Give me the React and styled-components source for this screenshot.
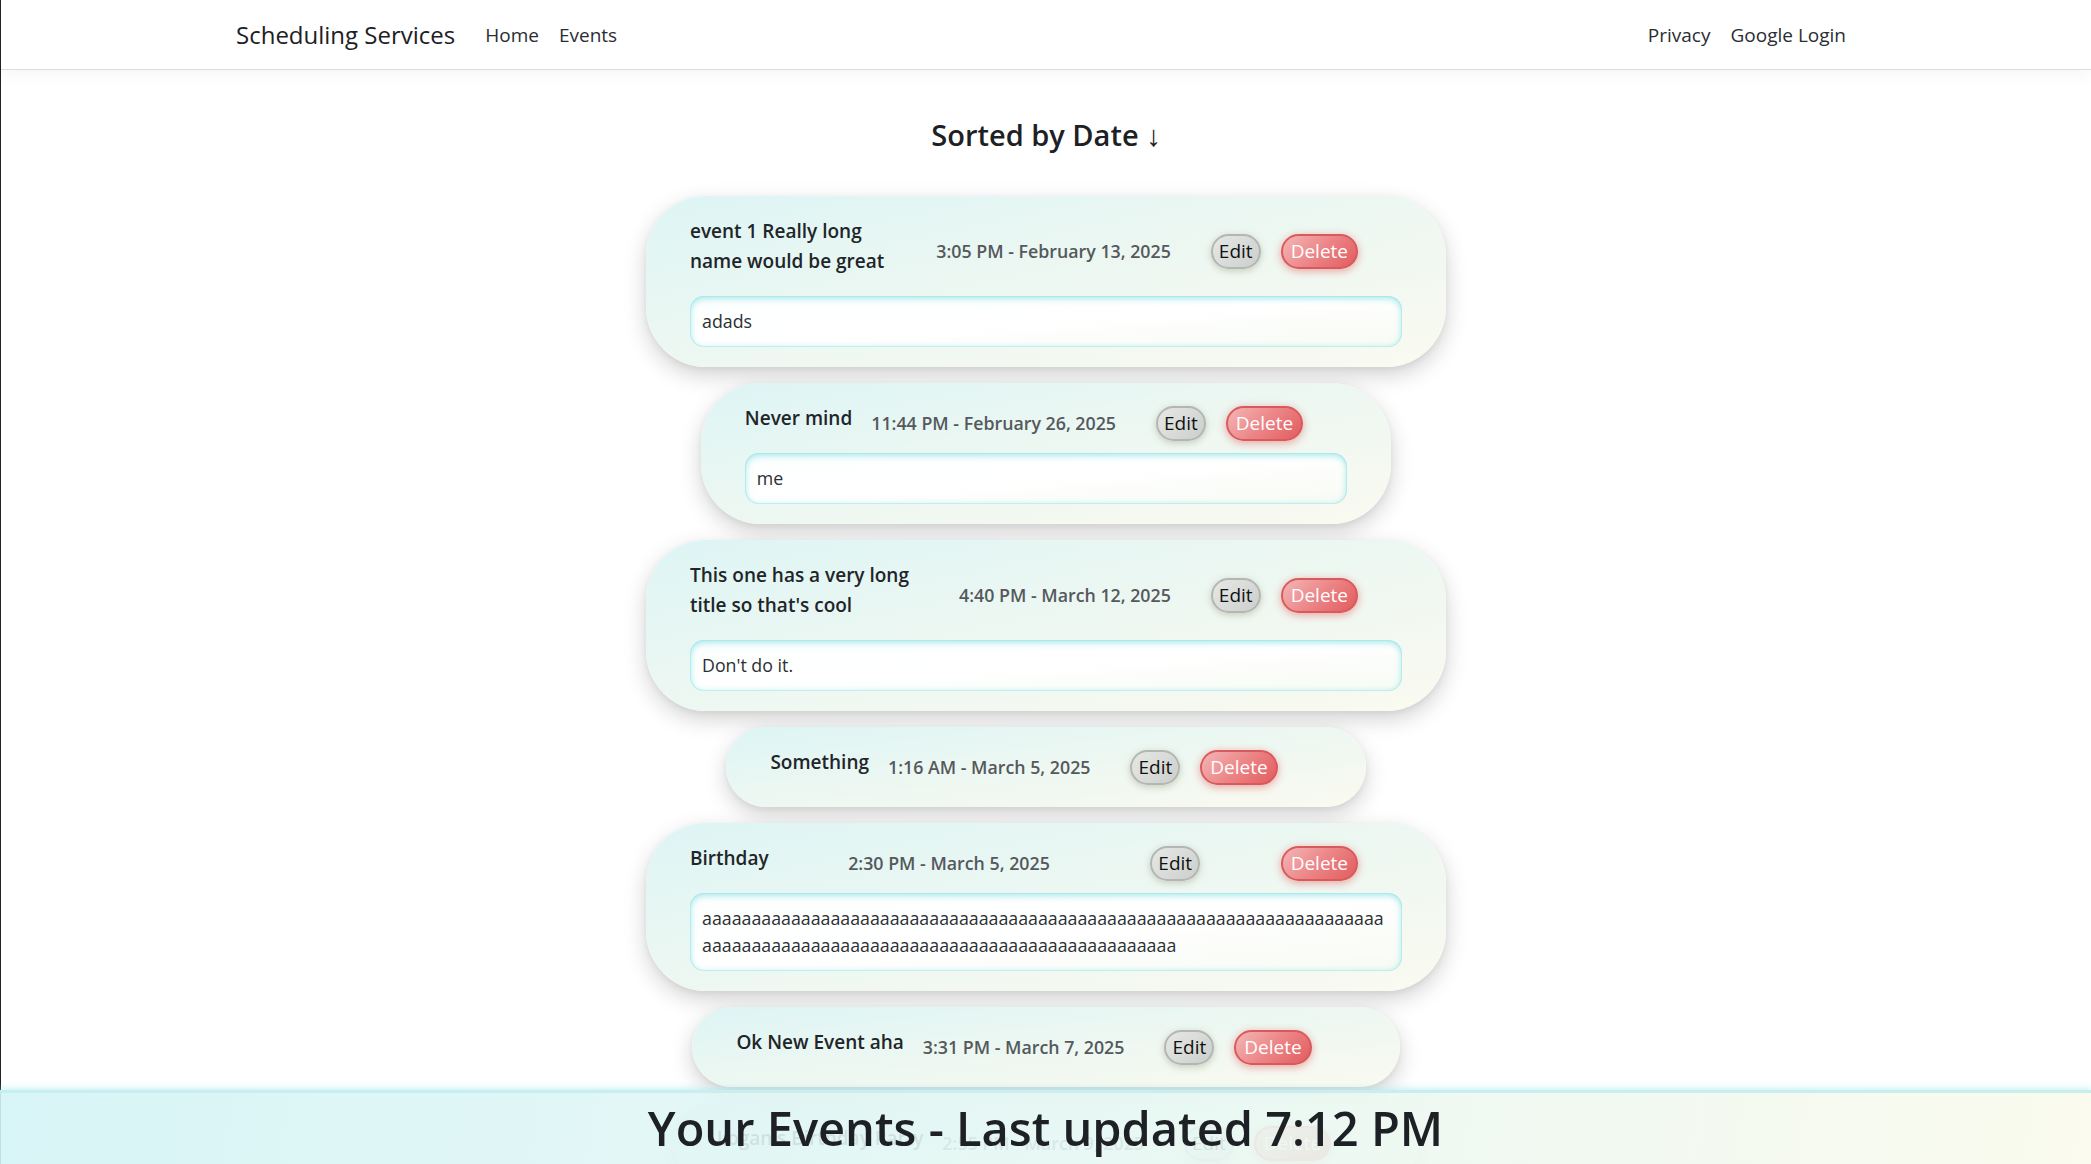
import React from 'react'
import styled, { createGlobalStyle } from 'styled-components'

const events = [
  { title: 'event 1 Really long name would be great', when: '3:05 PM - February 13, 2025', note: 'adads' },
  { title: 'Never mind', when: '11:44 PM - February 26, 2025', note: 'me' },
  { title: "This one has a very long title so that's cool", when: '4:40 PM - March 12, 2025', note: "Don't do it." },
  { title: 'Something', when: '1:16 AM - March 5, 2025' },
  { title: 'Birthday', when: '2:30 PM - March 5, 2025', note: 'a'.repeat(117) },
  { title: 'Ok New Event aha', when: '3:31 PM - March 7, 2025' },
  { title: "Logan's Birthday Party", when: '2:55 PM - March 9, 2025' },
]

export default function App() {
  return (
    <>
      <GlobalStyle />
      <Navbar>
        <NavInner>
          <Brand href="#">Scheduling Services</Brand>
          <NavList>
            <NavLink href="#">Home</NavLink>
            <NavLink href="#">Events</NavLink>
          </NavList>
          <NavList $right>
            <NavLink href="#">Privacy</NavLink>
            <NavLink href="#">Google Login</NavLink>
          </NavList>
        </NavInner>
      </Navbar>

      <Main>
        <Heading>Sorted by Date ↓</Heading>
        <EventList>
          {events.map((ev) => (
            <EventCard key={ev.title}>
              <CardHeader>
                <EventTitle>{ev.title}</EventTitle>
                <EventDate>{ev.when}</EventDate>
                <Button>Edit</Button>
                <Button $danger>Delete</Button>
              </CardHeader>
              {ev.note && <Note>{ev.note}</Note>}
            </EventCard>
          ))}
        </EventList>
      </Main>

      <Footer>
        <FooterTitle>Your Events - Last updated 7:12 PM</FooterTitle>
      </Footer>
    </>
  )
}

const GlobalStyle = createGlobalStyle`
  html, body {
    margin: 0;
    padding: 0;
  }
  body {
    font-family: "Open Sans", "Noto Sans", sans-serif;
    color: #212529;
    background: #fff;
    border-left: 1px solid #1f2326;
    min-height: 100vh;
  }
  * { box-sizing: border-box; }
`

const Navbar = styled.nav`
  background: #fff;
  border-bottom: 1px solid #dcdde3;
  box-shadow: 0 5px 15px rgba(0, 0, 0, 0.04);
`

const NavInner = styled.div`
  max-width: 1650px;
  margin: 0 auto;
  padding: 0 15px;
  height: 69px;
  display: flex;
  align-items: center;
`

const Brand = styled.a`
  font-size: 24px;
  color: #1d2024;
  text-decoration: none;
  margin-right: 20px;
`

const NavList = styled.div`
  display: flex;
  margin-left: ${(p) => (p.$right ? 'auto' : '0')};
`

const NavLink = styled.a`
  font-size: 19px;
  color: #2a2d33;
  text-decoration: none;
  padding: 0 10px;
`

const Main = styled.main`
  max-width: 1650px;
  margin: 0 auto;
  padding: 20px 15px 140px;
`

const Heading = styled.h4`
  margin: 27px 0 43px;
  text-align: center;
  font-size: 29px;
  font-weight: 600;
  line-height: 36px;
  color: #1d2024;
`

const EventList = styled.div`
  display: flex;
  flex-direction: column;
  align-items: center;
  gap: 16px;
`

const EventCard = styled.div`
  width: fit-content;
  max-width: 800px;
  padding: 20px 44px;
  border-radius: 60px;
  background: linear-gradient(to bottom right, #ddf5f5 0%, #ecf7f2 45%, #fafaf0 100%);
  box-shadow: 0 8px 22px rgba(0, 0, 0, 0.18), 0 2px 6px rgba(0, 0, 0, 0.05);
`

const CardHeader = styled.div`
  display: flex;
  align-items: center;
  justify-content: space-between;
  padding-right: 44px;
`

const EventTitle = styled.div`
  flex: 0 1 auto;
  font-size: 19px;
  font-weight: 600;
  line-height: 30px;
  margin: 0 19px 10px 0;
  color: #212529;
`

const EventDate = styled.div`
  flex-shrink: 0;
  white-space: nowrap;
  font-size: 17.8px;
  font-weight: 600;
  color: #55595d;
  margin-right: 40px;
`

const Button = styled.button`
  flex-shrink: 0;
  height: 35px;
  padding: 0 ${(p) => (p.$danger ? '8px' : '6px')};
  margin-right: ${(p) => (p.$danger ? '0' : '20px')};
  border-radius: 18px;
  font-family: inherit;
  font-size: 19px;
  line-height: 1;
  cursor: pointer;
  border: 2px solid ${(p) => (p.$danger ? '#d95a5c' : '#b3b6b3')};
  color: ${(p) => (p.$danger ? '#fff' : '#111')};
  background: ${(p) =>
    p.$danger
      ? 'linear-gradient(135deg, #f4b6b6 0%, #ec8587 50%, #e25c5e 100%)'
      : 'linear-gradient(135deg, #e6e8e6 0%, #d6d9d6 60%, #cbcfcb 100%)'};
  box-shadow: ${(p) =>
    p.$danger
      ? '0 2px 8px rgba(220, 60, 60, 0.45)'
      : '0 2px 7px rgba(120, 125, 90, 0.35)'};
`

const Note = styled.div`
  margin-top: 10px;
  padding: 12px;
  border-radius: 14px;
  font-size: 17.8px;
  line-height: 27px;
  color: #2b2f33;
  overflow-wrap: anywhere;
  background: linear-gradient(to bottom right, #fcfefe 0%, #ffffff 50%, #f7fbf4 100%);
  box-shadow: inset 0 3px 6px rgba(140, 225, 228, 0.6), inset 0 0 0 1px rgba(190, 238, 240, 0.9),
    inset 0 0 6px rgba(170, 235, 235, 0.5);
`

const Footer = styled.footer`
  position: fixed;
  left: 0;
  right: 0;
  bottom: 0;
  height: 74px;
  display: flex;
  align-items: center;
  justify-content: center;
  border-top: 3px solid rgba(196, 238, 240, 0.95);
  box-shadow: 0 -2px 6px rgba(170, 232, 236, 0.6);
  background: linear-gradient(100deg, rgba(212, 244, 246, 0.9) 0%, rgba(230, 247, 244, 0.9) 50%, rgba(250, 250, 236, 0.9) 100%);
`

const FooterTitle = styled.h1`
  margin: 0;
  font-size: 47px;
  font-weight: 600;
  line-height: 1.2;
  color: #1d2024;
`
